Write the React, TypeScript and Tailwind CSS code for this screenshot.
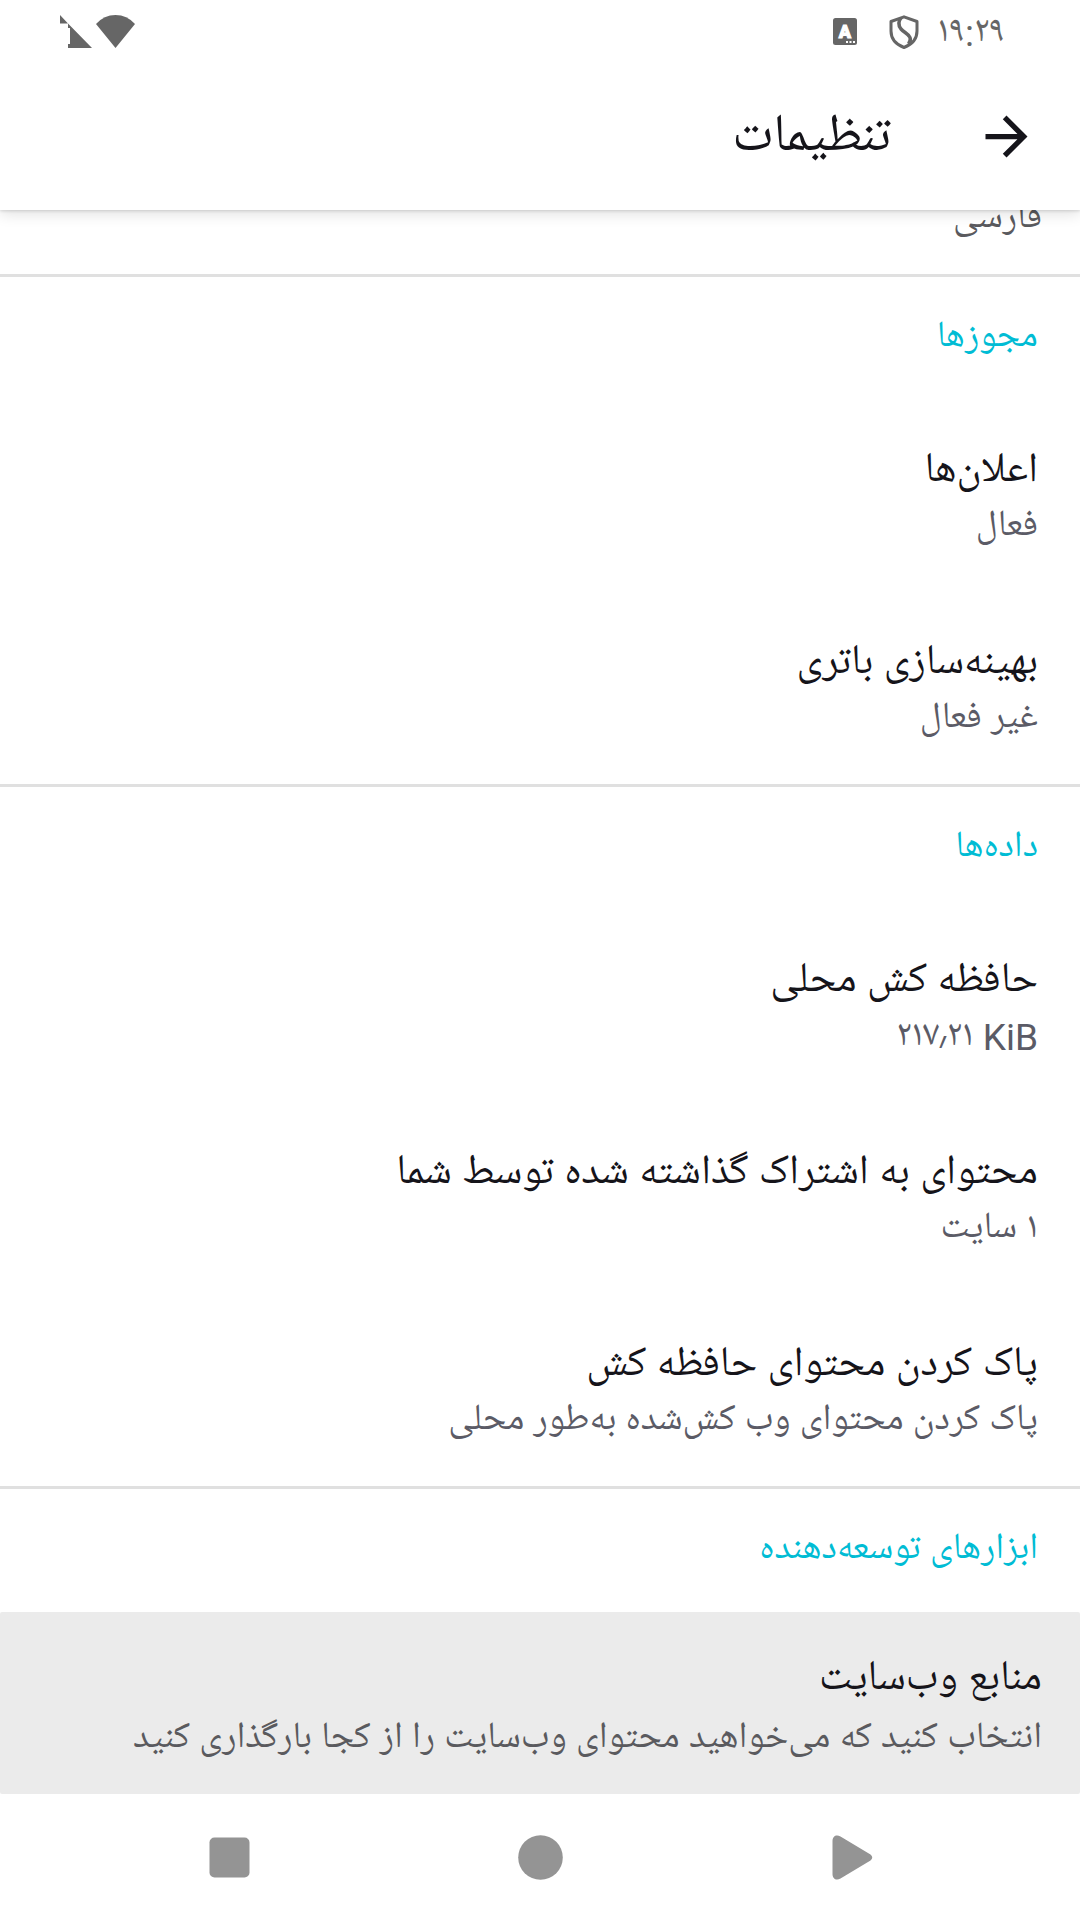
type Item = { title: string; summary: string };
type Section = { heading: string; items: Item[] };

const sections: Section[] = [
  {
    heading: "مجوزها",
    items: [
      { title: "اعلان‌ها", summary: "فعال" },
      { title: "بهینه‌سازی باتری", summary: "غیر فعال" },
    ],
  },
  {
    heading: "داده‌ها",
    items: [
      { title: "حافظه کش محلی", summary: "\u200e۲۱۷٫۲۱ KiB" },
      { title: "محتوای به اشتراک گذاشته شده توسط شما", summary: "۱ سایت" },
      { title: "پاک کردن محتوای حافظه کش", summary: "پاک کردن محتوای وب کش‌شده به‌طور محلی" },
    ],
  },
];

function StatusBar() {
  return (
    <div className="flex h-[63px] items-center justify-between pr-[75px] pl-[60px] text-[#666]">
      <div className="flex items-center">
        <time className="pt-1 text-[37px] leading-[48px]">۱۹:۲۹</time>
        <svg className="mr-[18px] h-[34px] w-[30px]" viewBox="0 0 30 34" fill="none" stroke="currentColor" strokeWidth="3" aria-hidden="true">
          <path d="M15 1.8 28 6.5V16c0 8-5 13.500-13 16.500C7 29.500 2 24 2 16V6.500z" strokeLinejoin="round" />
          <path d="M12 3C9.500 6 9 10 12 14c3 3.500 7.500 4.500 9 8.500 .8 2 .3 4-1.500 6.500" strokeWidth="3.500" />
        </svg>
        <svg className="mr-8 h-[27px] w-6" viewBox="0 0 24 27" role="img" aria-label="صفحه‌کلید">
          <rect width="24" height="27" rx="2.500" fill="currentColor" />
          <text x="12" y="20" textAnchor="middle" fontSize="18" fontWeight="900" fill="#fff" stroke="#fff" fontFamily="Roboto, sans-serif">A</text>
          <path d="M13 23h2v2h-2zM16.500 23h2v2h-2zM20 23h2v2h-2z" fill="#fff" />
        </svg>
      </div>
      <div className="flex items-center gap-1">
        <svg className="h-[33px] w-[39px]" viewBox="0 0 39 33" fill="currentColor" aria-hidden="true">
          <path d="M0 9Q8 0 19.500 0T39 9L19.500 33z" />
        </svg>
        <svg className="h-[33px] w-8" viewBox="0 0 32 33" fill="currentColor" aria-hidden="true">
          <path d="M0 0 8 8.500H0zM8 8.500 32 33H8v-4h2V13H8z" />
        </svg>
      </div>
    </div>
  );
}

function Row({ title, summary }: Item) {
  return (
    <li>
      <button type="button" className="block w-full px-[42px] pt-11 pb-[38px] text-start">
        <span className="block text-[42px] leading-[58px]">{title}</span>
        <span className="block text-[37px] leading-[52px] text-[#5b5b66]">{summary}</span>
      </button>
    </li>
  );
}

const headingClass = "px-[42px] pt-9 pb-[35px] text-[37px] leading-[52px] text-[#00bcd4]";

export default function App() {
  return (
    <div
      dir="rtl"
      lang="fa"
      className="flex min-h-screen flex-col bg-white font-[Roboto,'Noto_Naskh_Arabic_UI','Noto_Naskh_Arabic','DejaVu_Sans',sans-serif] text-[#15141a]"
    >
      <header className="relative z-10 bg-white shadow-[0_1px_3px_rgba(0,0,0,0.14),0_4px_14px_rgba(0,0,0,0.12)]">
        <StatusBar />
        <div className="flex h-[147px] items-center gap-[84px] px-[42px]">
          <button type="button" aria-label="بازگشت">
            <svg className="size-[63px]" viewBox="0 0 24 24" fill="currentColor" aria-hidden="true">
              <path d="M12 4l-1.410 1.410L16.170 11H4v2h12.170l-5.580 5.590L12 20l8-8z" />
            </svg>
          </button>
          <h1 className="pt-1 text-[53px] leading-[80px]">تنظیمات</h1>
        </div>
      </header>

      <main>
        <div className="h-16 overflow-hidden px-[38px]">
          <p className="-mt-4 text-[37px] leading-[52px] text-[#5a5a5e]">فارسی</p>
        </div>
        {sections.map((s) => (
          <section key={s.heading} className="border-t-[3px] border-[#e0e0e0]">
            <h2 className={headingClass}>{s.heading}</h2>
            <ul>
              {s.items.map((i) => (
                <Row key={i.title} {...i} />
              ))}
            </ul>
          </section>
        ))}
        <section className="border-t-[3px] border-[#e0e0e0]">
          <h2 className={headingClass}>ابزارهای توسعه‌دهنده</h2>
          <button type="button" className="block w-full rounded-xs bg-[#ebebeb] px-[38px] pt-10 pb-7 text-start">
            <span className="block text-[42px] leading-[58px]">منابع وب‌سایت</span>
            <span className="block pt-1 text-[37px] leading-[52px] text-[#5a5a5e]">
              انتخاب کنید که می‌خواهید محتوای وب‌سایت را از کجا بارگذاری کنید
            </span>
          </button>
        </section>
      </main>

      <nav className="flex h-[126px] items-center justify-center gap-[266px] text-[#949494]">
        <button type="button" aria-label="بازگشت">
          <svg className="size-[45px]" viewBox="0 0 45 45" fill="currentColor" aria-hidden="true">
            <path d="M3.500 6C3.500 1 7.500 -1 11.500 1.500L41.500 19.500Q45 22.500 41.500 25.500L11.500 43.500C7.500 46 3.500 44 3.500 39z" />
          </svg>
        </button>
        <button type="button" aria-label="خانه">
          <svg className="size-[45px]" viewBox="0 0 45 45" fill="currentColor" aria-hidden="true">
            <circle cx="22.500" cy="22.500" r="22.300" />
          </svg>
        </button>
        <button type="button" aria-label="برنامه‌های اخیر">
          <svg className="size-[45px]" viewBox="0 0 45 45" fill="currentColor" aria-hidden="true">
            <rect x="2.500" y="2.500" width="40" height="40" rx="5" />
          </svg>
        </button>
      </nav>
    </div>
  );
}
